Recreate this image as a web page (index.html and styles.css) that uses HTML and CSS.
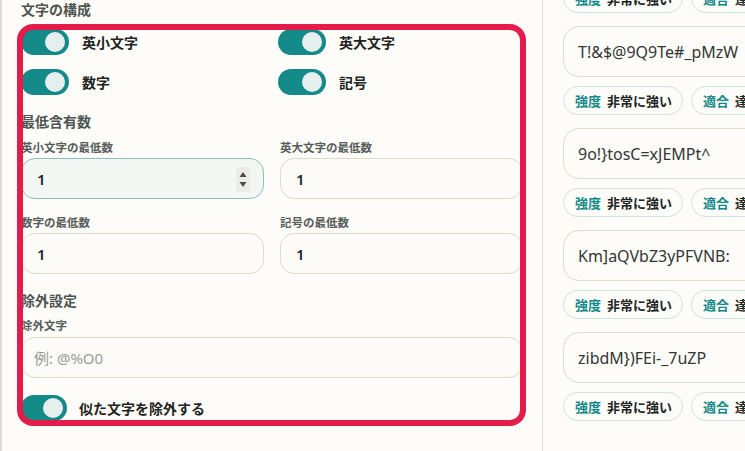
FILE: index.html
```html
<!DOCTYPE html>
<html lang="ja">

<head>
    <meta charset="utf-8">
    <title>パスワード生成</title>
    <meta name="viewport" content="width=device-width, initial-scale=1.0">
    <link rel="stylesheet" href="styles.css">
</head>

<body>
    <div class="page">
        <section class="settings">
            <h3 class="group-title">文字の構成</h3>

            <div class="toggle-grid">
                <label class="toggle-row"><span class="switch"><span class="knob"></span></span>英小文字</label>
                <label class="toggle-row"><span class="switch"><span class="knob"></span></span>英大文字</label>
                <label class="toggle-row"><span class="switch"><span class="knob"></span></span>数字</label>
                <label class="toggle-row"><span class="switch"><span class="knob"></span></span>記号</label>
            </div>

            <h3 class="group-title spaced">最低含有数</h3>

            <div class="field-grid">
                <div class="field">
                    <span class="field-label">英小文字の最低数</span>
                    <div class="input-wrap">
                        <input class="input is-focus" type="text" value="1">
                        <!-- number spinner of the focused field -->
                        <span class="spinner">
                            <svg width="14" height="25" viewBox="0 0 14 25">
                                <path d="M3.5 10 L7 5 L10.5 10 Z" fill="#4a4d4b" />
                                <path d="M3.5 15 L10.5 15 L7 20 Z" fill="#4a4d4b" />
                            </svg>
                        </span>
                    </div>
                </div>
                <div class="field">
                    <span class="field-label">英大文字の最低数</span>
                    <div class="input-wrap"><input class="input" type="text" value="1"></div>
                </div>
                <div class="field">
                    <span class="field-label">数字の最低数</span>
                    <div class="input-wrap"><input class="input" type="text" value="1"></div>
                </div>
                <div class="field">
                    <span class="field-label">記号の最低数</span>
                    <div class="input-wrap"><input class="input" type="text" value="1"></div>
                </div>
            </div>

            <h3 class="group-title spaced">除外設定</h3>

            <div class="field exclude">
                <span class="field-label">除外文字</span>
                <div class="input-wrap"><input class="input" type="text" placeholder="例: @%O0"></div>
            </div>

            <label class="toggle-row single"><span class="switch"><span class="knob"></span></span>似た文字を除外する</label>
        </section>

        <section class="results">
            <div class="result-list">
                <div class="result">
                    <div class="pills">
                        <span class="pill"><span class="pill-key">強度</span><span class="pill-val">非常に強い</span></span>
                        <span class="pill"><span class="pill-key">適合</span><span class="pill-val">達成</span></span>
                    </div>
                </div>

                <div class="result">
                    <div class="pw-box">T!&amp;$@9Q9Te#_pMzW</div>
                    <div class="pills">
                        <span class="pill"><span class="pill-key">強度</span><span class="pill-val">非常に強い</span></span>
                        <span class="pill"><span class="pill-key">適合</span><span class="pill-val">達成</span></span>
                    </div>
                </div>

                <div class="result">
                    <div class="pw-box">9o!}tosC=xJEMPt^</div>
                    <div class="pills">
                        <span class="pill"><span class="pill-key">強度</span><span class="pill-val">非常に強い</span></span>
                        <span class="pill"><span class="pill-key">適合</span><span class="pill-val">達成</span></span>
                    </div>
                </div>

                <div class="result">
                    <div class="pw-box">Km]aQVbZ3yPFVNB:</div>
                    <div class="pills">
                        <span class="pill"><span class="pill-key">強度</span><span class="pill-val">非常に強い</span></span>
                        <span class="pill"><span class="pill-key">適合</span><span class="pill-val">達成</span></span>
                    </div>
                </div>

                <div class="result">
                    <div class="pw-box">zibdM})FEi-_7uZP</div>
                    <div class="pills">
                        <span class="pill"><span class="pill-key">強度</span><span class="pill-val">非常に強い</span></span>
                        <span class="pill"><span class="pill-key">適合</span><span class="pill-val">達成</span></span>
                    </div>
                </div>
            </div>
        </section>

        <!-- highlight frame drawn over the settings block -->
        <div class="highlight"></div>
    </div>
</body>
</html>
```

FILE: styles.css
```css
* {
    box-sizing: border-box;
}

html, body {
    overflow: hidden;
}

body {
    margin: 0;
    background-color: #fdfcf8;
    font-family: "Noto Sans CJK JP", "Noto Sans", sans-serif;
    color: #232625;
}

.page {
    position: relative;
    display: flex;
    height: 451px;
}

/* Left: generator settings */
.settings {
    flex: 0 0 542px;
    border-left: 2px solid #dedcd2;
    padding: 0 19px 0 19px;
}

.group-title {
    margin: 0;
    font-size: 14px;
    line-height: 18px;
    font-weight: 700;
    color: #4f5552;
}

.group-title.spaced {
    margin-top: 17px;
}

.toggle-grid {
    display: grid;
    grid-template-columns: 243px 243px;
    column-gap: 14px;
    row-gap: 14px;
    margin-top: 11px;
}

.toggle-row {
    display: flex;
    align-items: center;
    gap: 13px;
    font-size: 14px;
    font-weight: 700;
    color: #1f2321;
}

.switch {
    position: relative;
    flex: 0 0 48px;
    height: 26px;
    border-radius: 13px;
    background-color: #138988;
}

.knob {
    position: absolute;
    top: 3px;
    right: 4px;
    width: 20px;
    height: 20px;
    border-radius: 50%;
    background-color: #e5efed;
}

.toggle-row.single {
    margin-top: 17px;
    gap: 12px;
}

.toggle-row.single .switch {
    flex-basis: 46px;
}

.field-grid {
    display: grid;
    grid-template-columns: 243px 243px;
    column-gap: 16px;
    row-gap: 15px;
    margin-top: 9px;
}

.field-label {
    display: block;
    font-size: 11.5px;
    line-height: 16px;
    font-weight: 700;
    color: #575d5a;
}

.input-wrap {
    position: relative;
    margin-top: 3px;
}

.input {
    display: block;
    width: 100%;
    height: 41px;
    padding: 0 14px 0 15px;
    border: 1px solid #dcdacf;
    border-radius: 14px;
    background-color: #fcfbf7;
    font-family: "Noto Sans", "Noto Sans CJK JP", sans-serif;
    font-size: 15px;
    font-weight: 600;
    color: #232625;
    outline: none;
}

.input::placeholder {
    color: #9a9b98;
    font-weight: 400;
}

.input.is-focus {
    background-color: #f2f7f4;
    border-color: #8cbfb8;
}

.spinner {
    position: absolute;
    top: 9px;
    right: 14px;
    width: 14px;
    height: 25px;
    background-color: #ececea;
}

.spinner svg {
    display: block;
}

.exclude {
    margin-top: 8px;
}

.exclude .input-wrap {
    margin-top: 4px;
}

.exclude .input {
    padding-left: 12px;
}

/* Right: generated passwords */
.results {
    flex: 0 0 262px;
    border-left: 1px solid #e0ded5;
    padding-left: 20px;
}

.result-list {
    margin-top: -16px;
}

.result {
    margin-bottom: 13px;
}

.pw-box {
    display: flex;
    align-items: center;
    height: 51px;
    margin-bottom: 9px;
    padding: 0 14px;
    border: 1px solid #dcdbd1;
    border-radius: 16px;
    font-family: "Noto Sans", sans-serif;
    font-size: 16px;
    color: #333735;
    white-space: nowrap;
}

.pills {
    display: flex;
    gap: 8px;
}

.pill {
    display: flex;
    flex-shrink: 0;
    align-items: center;
    gap: 6px;
    height: 29px;
    padding: 0 10px 0 11px;
    border: 1px solid #cde3df;
    border-radius: 15px;
    font-size: 13px;
    font-weight: 700;
    white-space: nowrap;
}

.pill-key {
    color: #13898a;
}

.pill-val {
    color: #222523;
}

.highlight {
    position: absolute;
    left: 17px;
    top: 24px;
    width: 509px;
    height: 402px;
    border: 6px solid #e31c4b;
    border-radius: 16px;
    pointer-events: none;
}
```
